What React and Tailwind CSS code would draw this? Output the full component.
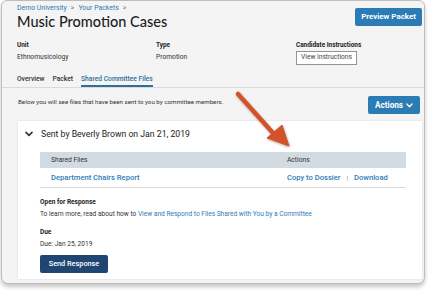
import React from 'react'

function Chevron({ className }) {
  return (
    <svg className={className} viewBox="0 0 12 8" fill="none" stroke="currentColor" strokeWidth={2.4} strokeLinecap="round" strokeLinejoin="round">
      <path d="M1.5 1.5L6 6l4.5-4.5" />
    </svg>
  )
}

export default function App() {
  return (
    <div className="w-[428px] h-[292px] bg-white overflow-hidden font-['Roboto',sans-serif] text-[#333]">
      <div className="relative ml-[1px] mr-[3px] h-[284px] bg-[#f4f4f4] border border-[#bdbdbd] rounded-b-[7px] rounded-t-[6px] shadow-[0_3px_4px_rgba(0,0,0,0.22)] overflow-hidden">
        {/* header */}
        <div className="flex justify-between pl-[15px] pr-[2px]">
          <div className="pt-[2px]">
            <div className="text-[6.9px] text-[#2d7cb8] flex items-center gap-[4px] leading-[10px]">
              <span>Demo University</span><span className="text-[#777]">&gt;</span>
              <span>Your Packets</span><span className="text-[#777]">&gt;</span>
            </div>
            <div className="text-[14.5px] font-medium text-[#1e1e1e] leading-[18px] font-['Lato',sans-serif]">Music Promotion Cases</div>
          </div>
          <button className="mt-[7px] h-[18px] w-[67px] bg-[#2b7bb5] text-white text-[7.9px] font-bold rounded-[2px]">Preview Packet</button>
        </div>

        <div className="flex pl-[15px] mt-[10px] text-[6.7px]">
          <div className="w-[139px]">
            <div className="font-bold leading-[9px] text-[#222] text-[6.4px]">Unit</div>
            <div className="mt-[3px] leading-[9px]">Ethnomusicology</div>
          </div>
          <div className="w-[140px]">
            <div className="font-bold leading-[9px] text-[#222] text-[6.4px]">Type</div>
            <div className="mt-[3px] leading-[9px]">Promotion</div>
          </div>
          <div>
            <div className="font-bold leading-[9px] text-[#222] text-[6.4px]">Candidate Instructions</div>
            <div className="mt-[1px] inline-flex items-center justify-center w-[61px] h-[14px] border border-[#8a97a3] bg-white text-[6.6px] text-[#444]">View Instructions</div>
          </div>
        </div>

        {/* tabs */}
        <div className="flex gap-[8px] pl-[15px] mt-[10px] text-[6.7px] font-medium leading-[9px] border-b border-[#dadada]">
          <div className="pb-[3px]">Overview</div>
          <div className="pb-[3px]">Packet</div>
          <div className="pb-[1px] text-[#2d6f9e] border-b-2 border-[#2d6f9e]">Shared Committee Files</div>
        </div>

        <div className="flex items-start justify-between pl-[16px] pr-[4px] mt-[8px]">
          <div className="mt-[2px] text-[6.2px] leading-[9px] text-[#333]">Below you will see files that have been sent to you by committee members.</div>
          <button className="h-[18px] w-[52px] flex items-center justify-center gap-[3px] bg-[#2b7bb5] text-white text-[8.2px] font-bold rounded-[2px]">
            Actions <Chevron className="w-[7px] h-[5px]" />
          </button>
        </div>

        {/* card */}
        <div className="ml-[16px] mr-[2px] mt-[7px] h-[158px] bg-white shadow-[0_0_2px_rgba(0,0,0,0.12)]">
          <div className="flex items-center gap-[8px] pl-[7px] pt-[8px] text-[8.7px] text-[#222] leading-[10px]">
            <Chevron className="w-[8px] h-[6px] text-[#333]" />
            <span>Sent by Beverly Brown on Jan 21, 2019</span>
          </div>
          <div className="ml-[22px] mr-[16px] mt-[13px]">
            <div className="flex h-[16px] items-center bg-[#d2dbe1] text-[6.7px] text-[#333]">
              <div className="w-[247px] pl-[11px]">Shared Files</div>
              <div>Actions</div>
            </div>
            <div className="flex h-[20px] items-center border-b border-[#dadada] text-[7.6px] font-medium text-[#2d7cb8]">
              <div className="w-[247px] pl-[11px]">Department Chairs Report</div>
              <div className="flex items-center gap-[6px]">
                <span>Copy to Dossier</span>
                <span className="text-[#888] text-[6px]">|</span>
                <span>Download</span>
              </div>
            </div>
          </div>
          <div className="pl-[22px] mt-[10px] text-[6.6px]">
            <div className="font-bold leading-[9px] text-[#222] text-[6.5px]">Open for Response</div>
            <div className="mt-[3px] leading-[9px]">
              To learn more, read about how to <span className="text-[#2d7cb8]">View and Respond to Files Shared with You by a Committee</span>
            </div>
            <div className="font-bold mt-[9px] leading-[9px] text-[#222] text-[6.5px]">Due</div>
            <div className="mt-[3px] leading-[9px]">Due: Jan 25, 2019</div>
            <button className="mt-[6px] h-[18px] w-[68px] bg-[#1f4672] text-white text-[7.3px] font-medium rounded-[2px]">Send Response</button>
          </div>
        </div>

        {/* annotation arrow */}
        <svg className="absolute left-[227px] top-[84px] pointer-events-none" width="72" height="70" viewBox="0 0 72 70">
          <defs>
            <filter id="sh" x="-20%" y="-20%" width="140%" height="140%">
              <feDropShadow dx="0.5" dy="1" stdDeviation="0.8" floodColor="#000" floodOpacity="0.35" />
            </filter>
          </defs>
          <g filter="url(#sh)" fill="#d2532a" stroke="#d2532a" strokeLinejoin="round">
            <path d="M9 9L44 48" strokeWidth={4.5} strokeLinecap="round" fill="none" />
            <path d="M38 53L53 40L60 61Z" strokeWidth={1} />
          </g>
        </svg>
      </div>
    </div>
  )
}
